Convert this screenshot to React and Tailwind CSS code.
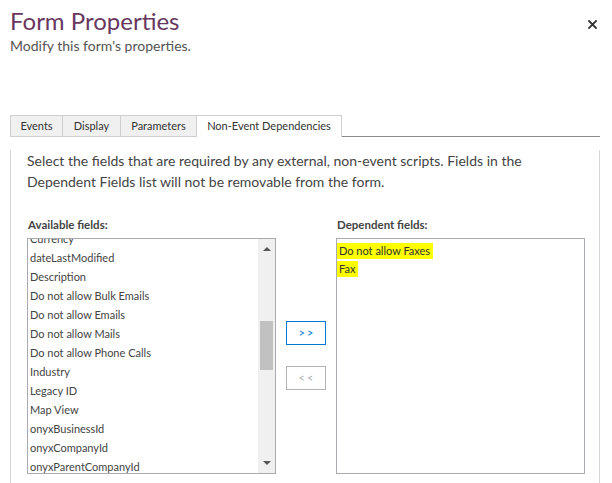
export default function App() {

    const available = [
        "Currency",
        "dateLastModified",
        "Description",
        "Do not allow Bulk Emails",
        "Do not allow Emails",
        "Do not allow Mails",
        "Do not allow Phone Calls",
        "Industry",
        "Legacy ID",
        "Map View",
        "onyxBusinessId",
        "onyxCompanyId",
        "onyxParentCompanyId",
    ];

    const dependent = ["Do not allow Faxes", "Fax"];

    const tabs = [
        { label: "Events", width: "w-[52px]" },
        { label: "Display", width: "w-[58px]" },
        { label: "Parameters", width: "w-[76px]" },
    ];

    return (
        <div className="w-[612px] h-[483px] bg-white overflow-hidden relative text-[#444]" style={{ fontFamily: 'Lato, "Open Sans", sans-serif' }}>

            {/* Header */}
            <div className="pl-[10px] pt-[5px]">
                <h1 className="text-[24px] leading-[32px] text-[#68375e] font-normal">Form Properties</h1>
                <p className="text-[14px] leading-[18px] text-[#555]">Modify this form's properties.</p>
            </div>

            {/* Close */}
            <button type="button" className="absolute left-[588px] top-[20px] w-[9px] h-[9px]">
                <svg viewBox="0 0 9 9" className="w-[9px] h-[9px] block" stroke="#333" strokeWidth="1.8" strokeLinecap="square">
                    <path d="M1 1L8 8M8 1L1 8" />
                </svg>
            </button>

            {/* Tabs */}
            <div className="flex items-end mt-[60px] ml-[10px] w-[590px] h-[22px]">
                {tabs.map((tab) => (
                    <div key={tab.label} className={`${tab.width} h-[22px] border border-[#cfcfcf] border-r-0 bg-[#f0f0f0] text-[11px] leading-[20px] text-[#333] text-center`}>
                        {tab.label}
                    </div>
                ))}
                <div className="w-[146px] h-[22px] border border-[#cfcfcf] border-b-0 bg-white text-[11px] leading-[20px] text-[#333] text-center">
                    Non-Event Dependencies
                </div>
                <div className="flex-1 h-[22px] border-b border-[#8a8a8a]"></div>
            </div>

            {/* Panel */}
            <div className="ml-[10px] w-[590px] h-[346px] border-l border-r border-[#d6d6d6] pl-[16px]">

                <p className="mt-[13px] text-[14px] leading-[21px] text-[#444] w-[520px]">
                    Select the fields that are required by any external, non-event scripts. Fields in the Dependent Fields list will not be removable from the form.
                </p>

                <div className="flex mt-[25px]">

                    {/* Available */}
                    <div className="flex flex-col">
                        <div className="text-[11.5px] leading-[16px] font-bold text-[#444] h-[21px] pl-[1px]">Available fields:</div>
                        <div className="w-[249px] h-[236px] border border-[#a9abb0] flex overflow-hidden">
                            <div className="flex-1 overflow-hidden">
                                <div className="-mt-[10px]">
                                    {available.map((item) => (
                                        <div key={item} className="h-[19px] leading-[19px] pl-[2px] text-[11px] text-[#444] whitespace-nowrap">{item}</div>
                                    ))}
                                </div>
                            </div>
                            <div className="w-[17px] bg-[#f0f0f0] flex flex-col items-center">
                                <div className="h-[18px] flex items-center justify-center mt-[1px]">
                                    <div className="w-0 h-0 border-l-[4px] border-r-[4px] border-b-[4px] border-l-transparent border-r-transparent border-b-[#555]"></div>
                                </div>
                                <div className="w-[13px] h-[49px] bg-[#c1c1c1] mt-[63px]"></div>
                                <div className="flex-1"></div>
                                <div className="h-[18px] flex items-center justify-center mb-[1px]">
                                    <div className="w-0 h-0 border-l-[4px] border-r-[4px] border-t-[4px] border-l-transparent border-r-transparent border-t-[#555]"></div>
                                </div>
                            </div>
                        </div>
                    </div>

                    {/* Move buttons */}
                    <div className="flex flex-col mx-[10px] pt-[104px]">
                        <button type="button" className="w-[40px] h-[24px] border border-[#0078d4] text-[#0078d4] text-[11px] leading-[22px] tracking-[2px] pl-[2px] bg-white">&gt;&gt;</button>
                        <button type="button" className="w-[40px] h-[24px] mt-[21px] border border-[#b5b5b5] text-[#b0b0b0] text-[11px] leading-[22px] tracking-[2px] pl-[2px] bg-white">&lt;&lt;</button>
                    </div>

                    {/* Dependent */}
                    <div className="flex flex-col">
                        <div className="text-[11.5px] leading-[16px] font-bold text-[#444] h-[21px] pl-[1px]">Dependent fields:</div>
                        <div className="w-[249px] h-[236px] border border-[#a9abb0] pt-[4px]">
                            {dependent.map((item) => (
                                <div key={item} className="h-[18px] flex items-start">
                                    <span className="bg-[#ffff00] h-[16px] leading-[16px] pl-[2px] pr-[3px] text-[11px] text-[#333] whitespace-nowrap">{item}</span>
                                </div>
                            ))}
                        </div>
                    </div>

                </div>
            </div>

        </div>
    )
}
